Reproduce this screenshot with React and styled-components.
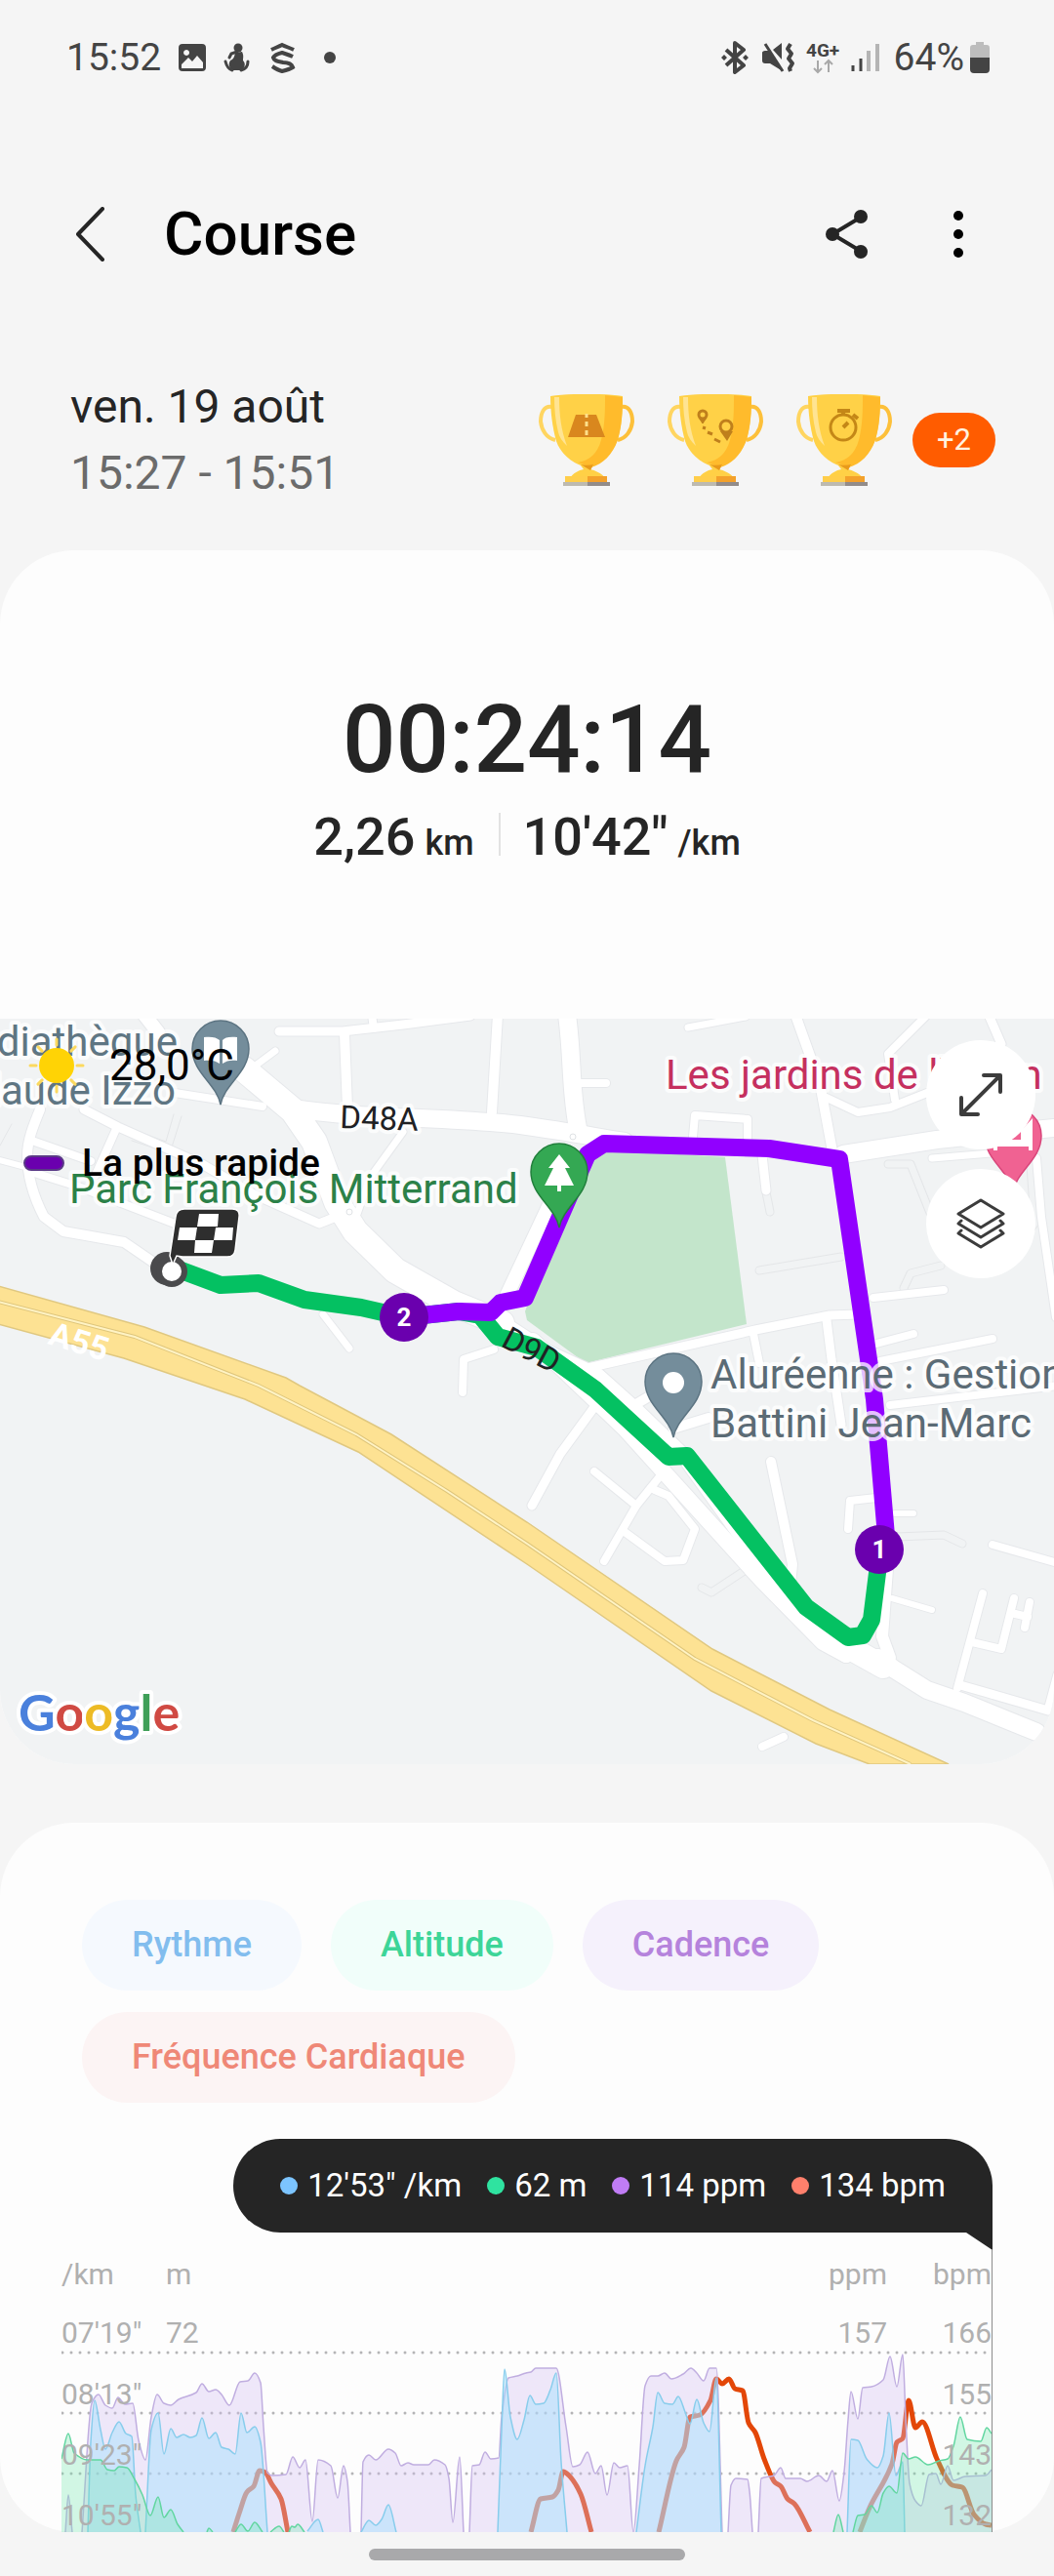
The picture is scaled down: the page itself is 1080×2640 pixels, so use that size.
import React from "react";
import styled, { createGlobalStyle } from "styled-components";

const GlobalStyle = createGlobalStyle`
  * { box-sizing: border-box; }
  body {
    margin: 0;
    background: #f5f5f5;
    font-family: Roboto, "Liberation Sans", sans-serif;
    color: #252525;
  }
  button { font: inherit; border: 0; padding: 0; background: none; cursor: pointer; }
  svg { display: block; flex: none; }
`;

const Page = styled.main`
  display: flex;
  flex-direction: column;
  min-height: 100vh;
`;

const StatusBar = styled.div`
  display: flex;
  justify-content: space-between;
  padding: 36px 66px 36px 68px;
  font-size: 39px;
  line-height: 46px;
  color: #444;
`;

const StatusGroup = styled.div`
  display: flex;
  align-items: center;
  gap: ${(p) => p.$gap}px;
`;

const Header = styled.header`
  display: flex;
  align-items: center;
  padding: 84px 78px 80px;
`;

const Title = styled.h1`
  flex: 1;
  margin: 0 0 0 60px;
  font-size: 62px;
  line-height: 76px;
  font-weight: 500;
  color: #000;
`;

const HeaderActions = styled.div`
  display: flex;
  gap: 86px;
  padding-right: 14px;
`;

const Summary = styled.section`
  display: flex;
  justify-content: space-between;
  align-items: center;
  padding: 25px 60px 45px 72px;
`;

const When = styled.div`
  font-size: 48px;
  line-height: 68px;
`;

const Hours = styled.div`
  color: #6b6b6b;
`;

const Awards = styled.div`
  display: flex;
  align-items: center;
  gap: 21px;
`;

const Trophies = styled.div`
  display: flex;
  gap: 34px;
`;

const MoreBadge = styled.button`
  padding: 0 25px;
  border-radius: 28px;
  background: #ff5c00;
  color: #fff3e0;
  font-size: 31px;
  line-height: 56px;
`;

const Card = styled.section`
  background: #fdfdfd;
  border-radius: 76px;
`;

const ResultCard = styled(Card)`
  margin-bottom: 60px;
  overflow: hidden;
`;

const Result = styled.div`
  display: flex;
  flex-direction: column;
  align-items: center;
  gap: 12px;
  padding: 138px 0 154px;
  font-weight: 500;
`;

const Duration = styled.div`
  font-size: 96px;
  line-height: 112px;
`;

const Stats = styled.div`
  display: flex;
  font-size: 54px;
  line-height: 64px;
`;

const Stat = styled.div`
  padding: 0 25px;

  & + & { background: linear-gradient(#e2e2e2, #e2e2e2) 0 7px / 2px 44px no-repeat; }
`;

const Unit = styled.span`
  margin-left: 10px;
  font-size: 36px;
  line-height: 36px;
`;

const MapBox = styled.div`
  position: relative;
  background: #f1f3f4;

  > svg { width: 100%; height: auto; }
`;

const MapInfo = styled.div`
  position: absolute;
  top: 18px;
  left: 24px;
  color: #000;
`;

const Weather = styled.div`
  display: flex;
  align-items: center;
  gap: 20px;
  margin-bottom: 40px;
  font-size: 44px;
  line-height: 60px;
`;

const Legend = styled.div`
  display: flex;
  align-items: center;
  gap: 18px;
  font-size: 39px;
  line-height: 60px;
  font-weight: 500;
`;

const LegendSwatch = styled.span`
  width: 42px;
  height: 16px;
  border: 2px solid #5a3a86;
  border-radius: 8px;
  background: #6a00ae;
`;

const MapButtons = styled.div`
  position: absolute;
  top: 22px;
  right: 19px;
  display: grid;
  gap: 20px;
`;

const RoundButton = styled.button`
  display: grid;
  place-items: center;
  width: 112px;
  height: 112px;
  border-radius: 50%;
  background: #fff;
`;

const Place = styled.text`
  font-size: ${(p) => p.$size || 42}px;
  fill: ${(p) => p.$color};
  stroke: ${(p) => p.$halo || "rgba(255, 255, 255, 0.75)"};
  stroke-width: 8px;
  stroke-linejoin: round;
  paint-order: stroke;
`;

const GoogleMark = styled.text`
  font-family: Lato, sans-serif;
  font-size: 52px;
  font-weight: 700;
  stroke: #fff;
  stroke-width: 8px;
  stroke-linejoin: round;
  paint-order: stroke;
`;

const ChartCard = styled(Card)`
  display: flex;
  flex-direction: column;
  padding: 79px 63px 0;
`;

const Chips = styled.div`
  display: flex;
  flex-wrap: wrap;
  gap: 22px 30px;
  padding: 0 21px;
  margin-bottom: 37px;
`;

const Chip = styled.button`
  padding: 0 51px;
  border-radius: 47px;
  font-size: 36px;
  line-height: 93px;
  font-weight: 500;
  color: ${(p) => p.$color};
  background: ${(p) => p.$bg};
`;

const Tooltip = styled.div`
  position: relative;
  align-self: flex-end;
  display: flex;
  gap: 26px;
  margin-bottom: 18px;
  padding: 0 48px;
  border-radius: 48px 48px 0 48px;
  background: #252525;
  color: #fff;
  font-size: 33px;
  line-height: 96px;
  white-space: nowrap;

  &::after {
    content: "";
    position: absolute;
    top: 100%;
    right: 0;
    width: 27px;
    height: 18px;
    background: #252525;
    clip-path: polygon(0 0, 100% 0, 100% 100%);
  }
`;

const Reading = styled.span`
  display: flex;
  align-items: center;
  gap: 10px;

  &::before {
    content: "";
    width: 18px;
    height: 18px;
    border-radius: 50%;
    background: ${(p) => p.$dot};
  }
`;

const Chart = styled.svg`
  width: 100%;
  height: auto;
`;

const AxisLabel = styled.text`
  font-size: 30px;
  fill: #b0b0b0;
`;

const NavBar = styled.div`
  display: flex;
  justify-content: center;
  padding: 17px 0 16px;
`;

const HomeHandle = styled.div`
  width: 30%;
  height: 12px;
  border-radius: 6px;
  background: #a9a9ab;
`;

/* ---------- status bar ---------- */

const LeftIcons = () => (
  <svg width="164" height="32" viewBox="182 43 164 32" fill="#444">
    <path fillRule="evenodd" d="M187 45h20a4 4 0 0 1 4 4v20a4 4 0 0 1-4 4h-20a4 4 0 0 1-4-4V49a4 4 0 0 1 4-4ZM186 70h22v-6l-6-7-5 6-4-4-7 7ZM191 51a3 3 0 1 0 .1 0Z" />
    <circle cx="244" cy="49" r="4.500" />
    <path d="M241 54l7-1c2 4 1 6 1 9 3 3 2 7-1 10h-9c-5-2-5-7-3-10 3-1 4-3 5-8Z" />
    <path d="M243 53l-6 2-2 4M231 63c1 4 3 8 7 9M254 63c0 5-3 8-7 9" fill="none" stroke="#444" strokeWidth="3" strokeLinecap="round" />
    <path d="M278 51c4-2 7-3 11-5 4 2 8 3 12 5M300 58c-4-2-8-3-11-4-4 1-8 3-9 5 1 4 5 4 10 5 5 0 9 2 10 5-3 2-7 3-11 4-4-1-7-3-10-5" fill="none" stroke="#444" strokeWidth="4" />
    <circle cx="338" cy="59" r="6" />
  </svg>
);

const RightIcons = () => (
  <svg width="164" height="34" viewBox="737 42 164 34" fill="none">
    <path d="M743 51l18 16-9 7V44l9 7-18 16" stroke="#444" strokeWidth="4" strokeLinejoin="round" />
    <path d="M738 59l3-3 3 3-3 3ZM760 59l3-3 3 3-3 3Z" fill="#444" />
    <path d="M780 54c0-1 1-2 3-2h5l13 21-13-8h-5c-2 0-3-1-3-3ZM791 51l9-7v17Z" fill="#444" />
    <path d="M783 45l18 28" stroke="#444" strokeWidth="3" />
    <path d="M809 45l-3 5 4 5-3 5 4 5-3 5 1 3" stroke="#444" strokeWidth="4" strokeLinejoin="round" />
    <text x="825" y="58" fontSize="19" fontWeight="700" fill="#444">4G+</text>
    <path d="M837 62v12m-4-4l4 4 4-4M848 74V62m-4 4l4-4 4 4" stroke="#a8a8a8" strokeWidth="2" />
    <path d="M873 67v6M881 60v13" stroke="#444" strokeWidth="3" />
    <path d="M889 52v21M898 45v28" stroke="#b4b4b4" strokeWidth="4" />
  </svg>
);

const Battery = () => (
  <svg width="20" height="32" viewBox="0 0 20 32">
    <path d="M6 0h8v3h3a3 3 0 0 1 3 3v11H0V6a3 3 0 0 1 3-3h3Z" fill="#bdbdbd" />
    <path d="M0 16h20v12a4 4 0 0 1-4 4H4a4 4 0 0 1-4-4Z" fill="#444" />
  </svg>
);

/* ---------- trophies ---------- */

const trophyIcons = {
  distance: (
    <g>
      <path d="M38 21h21l9 23H30Z" fill="#d9871e" />
      <path d="M49 20v4M49 28v5M49 37v5" stroke="#ffe08a" strokeWidth="3" />
    </g>
  ),
  route: (
    <g fill="none" stroke="#bf7f1c">
      <circle cx="36" cy="21" r="4" strokeWidth="3" />
      <path d="M32 24l4 6 4-6" fill="#bf7f1c" />
      <circle cx="60" cy="33" r="6" strokeWidth="3" />
      <path d="M54 38l7 10 6-10Z" fill="#bf7f1c" stroke="none" />
      <path d="M36 34l3 1M41 39l5 2M48 46l6 3" strokeWidth="3" />
    </g>
  ),
  time: (
    <g fill="none" stroke="#c48717" strokeWidth="3">
      <circle cx="48" cy="34" r="13" />
      <path d="M42 17h13M48 17v5M58 21l5 4M48 34l5-5" strokeWidth="4" />
    </g>
  ),
};

const Trophy = ({ kind }) => (
  <svg width="98" height="94" viewBox="0 0 98 94" role="img" aria-label={kind}>
    <path d="M14 13C5 11 2 20 2 28c1 9 6 17 15 19" fill="none" stroke="#ffd560" strokeWidth="4" />
    <path d="M84 13c9-2 12 7 12 15-1 9-6 17-15 19" fill="none" stroke="#fdc03a" strokeWidth="4" />
    <path d="M12 2c20-3 54-3 74 0 0 16-1 30-5 44-6 16-15 24-27 28h-8C33 70 22 60 18 48 14 34 12 18 12 2Z" fill="#ffd147" />
    <path d="M68 1l18 2c0 16-1 30-5 44-6 16-15 24-27 28-4-2-8-3-14-5 12-2 20-9 24-23 4-15 4-31 4-46Z" fill="#ffbb2c" />
    <path d="M16 3h5c0 18 2 34 8 50-5-5-8-9-9-14-3-12-4-24-4-36Z" fill="#ffe492" />
    <path d="M43 73h13l-3 4c4 1 12 4 14 8H33c2-4 8-7 13-8Z" fill="#ffd046" />
    <path d="M43 72c5 1 9 1 13 0l-3 6Z" fill="#e99a1b" />
    <path d="M27 84h23v6H27Z" fill="#ffce4a" />
    <path d="M50 84h20v6H50Z" fill="#f3a12b" />
    <path d="M25 90h25v4H25Z" fill="#bdbab0" />
    <path d="M50 90h23v4H50Z" fill="#928c8a" />
    {trophyIcons[kind]}
  </svg>
);

/* ---------- map ---------- */

const roads = [
  [26, "M250 52L300 94 322 126 345 188 364 218 405 258 465 292 514 312"],
  [16, "M514 312L560 342 612 366 650 400 704 452 760 530 830 620 867 652"],
  [16, "M546 330L640 420 781 576 843 639 867 652"],
  [24, "M862 640L905 664"],
  [18, "M900 655L915 666 950 688 988 701 1062 731"],
  [18, "M300 92C380 104 470 100 540 110S600 120 640 126"],
  [18, "M864 139L960 124 1080 112"],
  [8, "M179 76L269 90"],
  [9, "M286 13H351L413 6 482 -3"],
  [8, "M381 -4L383 10"],
  [14, "M148 -4L162 14"],
  [10, "M353 16L356 92"],
  [10, "M510 -4L504 96"],
  [7, "M282 33L255 53"],
  [9, "M86 93L121 111 207 149 260 180 327 210 352 200"],
  [10, "M41 93C34 110 28 125 28 140S32 178 45 203L65 218 127 229 162 253"],
  [8, "M30 124L93 146"],
  [8, "M32 157L80 172 179 210"],
  [8, "M119 113L98 160"],
  [6, "M-4 144L26 152"],
  [7, "M413 116L379 163 366 200"],
  [7, "M331 303L358 338"],
  [8, "M506 339L475 349 474 383"],
  [14, "M568 180L520 282"],
  [18, "M581 -4C587 40 584 70 592 112"],
  [8, "M592 66H621"],
  [7, "M705 9L764 -2"],
  [10, "M815 -4L840 66 853 136"],
  [8, "M847 81L879 96 912 91 950 76"],
  [8, "M950 -4L910 36 917 83"],
  [9, "M1013 -4L1026 26"],
  [8, "M710 121L712 99 766 103V124"],
  [9, "M781 140L785 176"],
  [8, "M1062 143L1067 203 1082 306"],
  [7, "M955 143L1015 138"],
  [9, "M602 358L774 319 850 304 880 303"],
  [8, "M895 286L967 278"],
  [8, "M898 333L936 323"],
  [8, "M902 351L1017 328"],
  [9, "M847 309L852 349 862 416"],
  [8, "M772 323L778 353"],
  [8, "M912 396L1084 376"],
  [9, "M609 398L574 446 545 499"],
  [8, "M609 464L652 499"],
  [8, "M681 463L652 499 619 556"],
  [8, "M671 483L685 489 712 523 700 555 681 556 640 526"],
  [10, "M650 396L667 386M690 420L726 409"],
  [10, "M790 454L812 559 810 580"],
  [8, "M869 523L871 494 898 491"],
  [6, "M917 507H936"],
  [8, "M1017 539L1084 558"],
  [6, "M914 594L955 606"],
  [8, "M1007 589L981 686"],
  [8, "M996 639L1026 646 1039 594M1055 598L1050 624M1036 609L1053 613"],
  [9, "M984 683L1012 691 1074 709 1084 672"],
  [8, "M781 746L803 736"],
  [12, "M910 550L904 633 912 655"],
];

const lanes = [
  "M785 178L789 198",
  "M719 583L729 588 767 563",
  "M919 531L967 529 986 538",
  "M778 258L862 244",
  "M910 149L933 149 953 199",
  "M926 276L933 261 964 253",
  "M1056 150L1060 210 1040 236",
];

const greenRoute =
  "M175 254L226 273 265 271 312 288 370 296 414 306 470 300 492 304 510 326 550 337 610 380 685 449 704 448 826 603 869 634 884 632 893 616 902 544";
const purpleRoute =
  "M414 306L470 300 503 301 513 291 538 286 574 203 602 139 619 128 788 133 860 144 891 356 896 390 908 530";

const Pin = ({ x, y, color, edge, children }) => (
  <g transform={`translate(${x} ${y})`}>
    <path d="M0 57C-4 36-29 24-29 0a29 29 0 0 1 58 0C29 24 4 36 0 57Z" fill={color} stroke={edge} strokeWidth="1.500" />
    {children}
  </g>
);

const Milestone = ({ x, y, label }) => (
  <g>
    <circle cx={x} cy={y} r="25" fill="#6a00ae" />
    <text x={x} y={y + 9} fontSize="26" fontWeight="700" fill="#fff" textAnchor="middle">{label}</text>
  </g>
);

const RouteMap = () => (
  <svg viewBox="0 0 1080 764" role="img" aria-label="Parcours">
    <path d="M538 300L574 203 602 139 619 134 743 142 765 313 600 353 540 309Z" fill="#c3e5cb" />
    <g fill="none" strokeLinecap="round" strokeLinejoin="round">
      {lanes.map((d) => <path key={d} d={d} stroke="#e4e6e8" strokeWidth="9" />)}
      {lanes.map((d) => <path key={d} d={d} stroke="#f1f3f4" strokeWidth="7" />)}
      <path d="M135 125L174 138 186 100M0 130L12 108M140 115L170 126 178 98" stroke="#e4e6e8" />
      {roads.map(([w, d]) => <path key={d} d={d} stroke="#e6e8eb" strokeWidth={w + 2} />)}
      {roads.map(([w, d]) => <path key={d} d={d} stroke="#fff" strokeWidth={w} />)}
    </g>
    <circle cx="358" cy="198" r="3" fill="none" stroke="#dfe2e5" />
    <circle cx="587" cy="121" r="3" fill="none" stroke="#dfe2e5" />
    <path d="M-2 274L148 316 293 368 307 376 401 426 540 516 730 646 850 708 972 764H891L836 743 729 689 540 559 367 444 251 390 127 348-2 313Z" fill="#fde293" stroke="#e0c880" strokeWidth="1.500" />
    <path d="M-2 290L138 326 265 376 365 426 458 484 540 538 712 656 833 719 933 764" fill="none" stroke="#dfc67c" strokeWidth="4" />
    <path d="M-2 290L138 326 265 376 365 426 458 484 540 538 712 656 833 719 933 764" fill="none" stroke="#fff3c4" strokeWidth="2" />
    <text x="48" y="333" fontSize="34" fontWeight="700" fill="#fff" transform="rotate(17 48 333)">A55</text>

    <g fill="none" strokeWidth="18" strokeLinejoin="round">
      <path d={greenRoute} stroke="#04c162" />
      <path d={purpleRoute} stroke="#9100ff" />
    </g>

    <Place x="182" y="38" textAnchor="end" $color="#5f7683">diathèque</Place>
    <Place x="180" y="88" textAnchor="end" $color="#5f7683">laude Izzo</Place>
    <Place x="348" y="112" $size="33" $color="#202124" transform="rotate(2 348 112)">D48A</Place>
    <Place x="512" y="335" $size="33" $color="#202124" $halo="none" transform="rotate(28 512 335)">D9D</Place>
    <Place x="71" y="189" $color="#2c8148">Parc François Mitterrand</Place>
    <Place x="682" y="72" $color="#c5305f">Les jardins de l'Orien</Place>
    <Place x="728" y="379" $color="#5b6b75">Aluréenne : Gestion</Place>
    <Place x="728" y="429" $color="#5b6b75">Battini Jean-Marc</Place>

    <Pin x="226" y="31" color="#748d9b" edge="#5c7482">
      <path d="M-17-12c7-1 13 0 16 3v24c-4-3-9-4-16-3ZM17-12C10-13 4-12 2-9v24c4-3 9-4 15-3Z" fill="#fff" />
    </Pin>
    <Pin x="573" y="157" color="#34a853" edge="#22803c">
      <path d="M0-18l11 14H6l9 18H2v6h-4v-6h-13l9-18h-5Z" fill="#fff" />
    </Pin>
    <Pin x="690" y="372" color="#748d9b" edge="#5c7482">
      <circle r="11" cy="1" fill="#fff" />
    </Pin>
    <Pin x="1038" y="120" color="#f06292" edge="#d9467b">
      <path d="M-20-14v29h4v-4h32v4h4v-33L8-5v9h-24v-18Z" fill="#fff" />
    </Pin>

    <circle cx="171" cy="256" r="17" fill="#4a4a4c" />
    <circle cx="176" cy="259" r="13" fill="#fff" stroke="#4a4a4c" strokeWidth="6" />
    <path d="M189 195h49q8 0 7 8l-4 34q-1 7-8 7h-46l-6-1-4 9-3-9 6-40q1-8 9-8Z" fill="#2e2e2e" stroke="#fff" strokeWidth="1.500" />
    <path d="M204 200h20l-1 13h-21ZM184 214h18l-2 13h-18ZM221 214h18l-1 13h-19ZM200 227h19l-2 13h-18Z" fill="#fff" />

    <Milestone x={414} y={306} label="2" />
    <Milestone x={901} y={544} label="1" />

    <GoogleMark x="19" y="730">
      <tspan fill="#4a80dc">G</tspan>
      <tspan fill="#d04a43">o</tspan>
      <tspan fill="#edbb25">o</tspan>
      <tspan fill="#4a80dc">g</tspan>
      <tspan fill="#3f9f58">l</tspan>
      <tspan fill="#d04a43">e</tspan>
    </GoogleMark>
  </svg>
);

const Sun = () => (
  <svg width="68" height="60" viewBox="-34 -30 68 60">
    <circle r="18" fill="#ffd305" />
    {[0, 45, 90, 135, 180, 225, 270, 315].map((a) => (
      <path key={a} d="M21 0h6" stroke="#fbd95f" strokeWidth="3" strokeLinecap="round" transform={`rotate(${a})`} />
    ))}
  </svg>
);

/* ---------- chart ---------- */

const FLOOR = 289;

const cadence = [
  [[4, 289], [7, 251], [11, 289]],
  [[21, 289], [31, 157], [38, 148], [45, 159], [52, 162], [58, 151], [65, 158], [73, 157], [79, 195], [86, 215], [92, 171], [98, 148], [105, 157], [112, 159], [120, 153], [138, 146], [144, 137], [151, 145], [158, 143], [164, 148], [172, 159], [183, 135], [191, 134], [198, 126], [204, 136], [207, 181], [211, 228], [216, 231], [230, 230], [237, 212], [244, 223], [250, 215], [257, 278], [263, 215], [276, 221], [283, 254], [289, 221], [293, 237], [296, 289]],
  [[307, 289], [309, 217], [315, 210], [322, 215], [335, 204], [342, 208], [348, 221], [355, 218], [361, 220], [376, 220], [382, 215], [393, 220], [397, 234], [401, 279], [408, 212], [412, 289]],
  [[418, 289], [421, 221], [428, 220], [434, 207], [440, 214], [448, 213], [451, 171], [458, 131], [467, 129], [476, 126], [481, 125], [486, 121], [507, 121], [517, 181], [524, 222], [531, 220], [539, 207], [547, 229], [553, 221], [559, 251], [566, 218], [572, 223], [580, 221], [586, 289], [592, 221], [598, 139], [604, 129], [611, 129], [618, 126], [625, 132], [637, 127], [645, 121], [651, 126], [658, 134], [664, 121], [671, 121], [677, 289]],
  [[683, 289], [686, 241], [691, 234], [703, 235], [705, 247], [708, 289]],
  [[714, 289], [717, 234], [730, 231], [737, 223], [742, 234], [757, 234], [764, 237], [776, 231], [784, 237], [790, 226], [797, 257], [802, 227], [806, 174], [809, 145], [816, 173], [821, 141], [830, 140], [842, 133], [849, 109], [856, 140], [862, 107], [865, 171], [869, 239], [875, 257], [881, 262], [889, 230], [896, 229], [901, 240], [908, 221], [914, 236], [926, 232], [947, 231], [953, 225]],
];

const pace = [
  [[27, 289], [30, 197], [34, 154], [40, 184], [45, 204], [52, 187], [59, 176], [66, 188], [72, 191], [76, 251], [81, 289]],
  [[86, 289], [92, 184], [99, 167], [105, 209], [112, 183], [118, 192], [125, 189], [132, 192], [138, 190], [144, 172], [151, 193], [158, 187], [164, 202], [171, 204], [178, 209], [184, 167], [190, 187], [198, 181], [204, 197], [211, 289]],
  [[252, 288], [263, 276], [268, 289]],
  [[307, 289], [315, 277], [322, 282], [328, 276], [335, 261], [343, 289]],
  [[447, 289], [451, 184], [454, 122], [460, 171], [467, 194], [474, 174], [480, 149], [486, 158], [494, 157], [501, 143], [507, 126], [512, 217], [518, 289]],
  [[589, 289], [598, 221], [606, 181], [611, 146], [618, 157], [626, 158], [632, 150], [639, 166], [644, 178], [651, 153], [658, 177], [664, 186], [671, 131], [676, 289]],
  [[805, 289], [809, 194], [816, 195], [825, 214], [836, 223], [842, 211], [848, 167], [855, 231], [862, 217], [864, 289]],
];

const altitude = [
  [[0, 214], [7, 188], [13, 208], [27, 215], [40, 215], [47, 225], [54, 226], [59, 222], [67, 223], [75, 235], [83, 251], [91, 272], [99, 253], [105, 274], [112, 266], [119, 281], [125, 289]],
  [[149, 289], [151, 285], [155, 289]],
  [[178, 289], [184, 281], [191, 288], [198, 279], [206, 289]],
  [[214, 289], [223, 283], [228, 289]],
  [[233, 289], [236, 283], [239, 284], [242, 281], [249, 289]],
  [[791, 289], [796, 271], [801, 289]],
  [[811, 289], [816, 272], [823, 271], [830, 262], [836, 269], [842, 249], [848, 242], [856, 249], [862, 208], [868, 214], [875, 212], [888, 220], [899, 216], [908, 214], [914, 201], [921, 171], [928, 194], [942, 196], [948, 182], [953, 188]],
];

const heartRate = [
  [[176, 289], [182, 270], [190, 248], [197, 242], [203, 226], [209, 228], [215, 239], [225, 255], [232, 289]],
  [[481, 289], [491, 255], [503, 253], [509, 246], [514, 227], [520, 231], [532, 250], [543, 289]],
  [[612, 289], [630, 216], [638, 202], [644, 171], [654, 169], [665, 154], [671, 132], [677, 137], [684, 132], [690, 142], [698, 144], [704, 177], [711, 187], [720, 214], [731, 238], [737, 242], [744, 255], [751, 260], [767, 289]],
  [[818, 289], [828, 264], [851, 219], [856, 197], [862, 193], [868, 154], [875, 182], [882, 176], [897, 214], [913, 241], [923, 243], [935, 271], [947, 281], [953, 282]],
];

// Monotone slopes keep the curve from overshooting its peaks.
function curve(points) {
  const slope = (a, b) => (b[1] - a[1]) / (b[0] - a[0]);
  const tangents = points.map((p, i) => {
    if (i === 0) return slope(p, points[1]);
    if (i === points.length - 1) return slope(points[i - 1], p);
    const before = slope(points[i - 1], p);
    const after = slope(p, points[i + 1]);
    return before * after <= 0 ? 0 : (2 * before * after) / (before + after);
  });
  return points.reduce((d, p, i) => {
    if (i === 0) return `M${p[0]} ${p[1]}`;
    const q = points[i - 1];
    const h = (p[0] - q[0]) / 3;
    return `${d}C${q[0] + h} ${q[1] + tangents[i - 1] * h} ${p[0] - h} ${p[1] - tangents[i] * h} ${p[0]} ${p[1]}`;
  }, "");
}

const Area = ({ series, fill, opacity, stroke }) =>
  series.map((points) => (
    <g key={points[0][0]}>
      <path
        d={`${curve(points)}V${FLOOR}H${points[0][0]}Z`}
        fill={fill}
        fillOpacity={opacity}
      />
      <path d={curve(points)} fill="none" stroke={stroke} strokeWidth="1.500" />
    </g>
  ));

const axis = [
  { x: 0, labels: ["/km", "07'19\"", "08'13\"", "09'23\"", "10'55\""] },
  { x: 107, labels: ["m", "72"] },
  { x: 846, end: true, labels: ["ppm", "157"] },
  { x: 953, end: true, labels: ["bpm", "166", "155", "143", "132"] },
];
const rows = [35, 95, 158, 220, 282];

const ActivityChart = () => (
  <Chart viewBox="0 0 954 289" role="img" aria-label="Rythme, altitude, cadence et fréquence cardiaque">
    <path d="M1 105H953M1 167H953M1 229H953" stroke="#b4b4b6" strokeWidth="3" strokeLinecap="round" strokeDasharray="0 9" />
    {heartRate.map((points) => (
      <path key={points[0][0]} d={curve(points)} fill="none" stroke="#e34708" strokeWidth="5" strokeLinejoin="round" />
    ))}
    <Area series={cadence} fill="#d1bdf1" opacity="0.35" stroke="#c0aee0" />
    <Area series={pace} fill="#9fdffc" opacity="0.45" stroke="#88cdec" />
    <Area series={altitude} fill="#6ee7ab" opacity="0.3" stroke="#62d6a0" />
    {axis.map((column) =>
      column.labels.map((label, i) => (
        <AxisLabel key={label} x={column.x} y={rows[i]} textAnchor={column.end ? "end" : "start"}>
          {label}
        </AxisLabel>
      ))
    )}
    <path d="M953.500 0V289" stroke="#8c8c8c" />
  </Chart>
);

export default function App() {
  return (
    <Page>
      <GlobalStyle />
      <StatusBar>
        <StatusGroup $gap={17}>
          15:52
          <LeftIcons />
        </StatusGroup>
        <StatusGroup $gap={14}>
          <RightIcons />
          <StatusGroup $gap={6}>
            64%
            <Battery />
          </StatusGroup>
        </StatusGroup>
      </StatusBar>

      <Header>
        <button aria-label="Retour">
          <svg width="30" height="56" viewBox="0 0 30 56" fill="none" stroke="#252525" strokeWidth="4" strokeLinecap="round" strokeLinejoin="round">
            <path d="M27 2L2 28l25 26" />
          </svg>
        </button>
        <Title>Course</Title>
        <HeaderActions>
          <button aria-label="Partager">
            <svg width="44" height="50" viewBox="0 0 44 50" fill="#252525">
              <path d="M37 7L7 25l30 18" fill="none" stroke="#252525" strokeWidth="4" />
              <circle cx="36" cy="7" r="7" />
              <circle cx="7" cy="25" r="7" />
              <circle cx="36" cy="43" r="7" />
            </svg>
          </button>
          <button aria-label="Plus d'options">
            <svg width="12" height="50" viewBox="0 0 12 50">
              <circle cx="6" cy="6" r="5" />
              <circle cx="6" cy="25" r="5" />
              <circle cx="6" cy="44" r="5" />
            </svg>
          </button>
        </HeaderActions>
      </Header>

      <Summary>
        <When>
          <div>ven. 19 août</div>
          <Hours>15:27 - 15:51</Hours>
        </When>
        <Awards>
          <Trophies>
            <Trophy kind="distance" />
            <Trophy kind="route" />
            <Trophy kind="time" />
          </Trophies>
          <MoreBadge>+2</MoreBadge>
        </Awards>
      </Summary>

      <ResultCard>
        <Result>
          <Duration>00:24:14</Duration>
          <Stats>
            <Stat>2,26<Unit>km</Unit></Stat>
            <Stat>10'42"<Unit>/km</Unit></Stat>
          </Stats>
        </Result>
        <MapBox>
          <RouteMap />
          <MapInfo>
            <Weather><Sun />28,0°C</Weather>
            <Legend><LegendSwatch />La plus rapide</Legend>
          </MapInfo>
          <MapButtons>
            <RoundButton aria-label="Agrandir la carte">
              <svg width="44" height="44" viewBox="0 0 44 44" fill="none" stroke="#3c3c3c" strokeWidth="4" strokeLinecap="round" strokeLinejoin="round">
                <path d="M3 41L41 3M25 2h17v17M2 25v17h17" />
              </svg>
            </RoundButton>
            <RoundButton aria-label="Type de carte">
              <svg width="50" height="52" viewBox="0 0 50 52" fill="none" stroke="#3c3c3c" strokeWidth="3" strokeLinecap="round" strokeLinejoin="round">
                <path d="M25 2l23 14-23 14L2 16ZM5 23l-3 3 23 14 23-14-3-3M5 33l-3 3 23 14 23-14-3-3" />
              </svg>
            </RoundButton>
          </MapButtons>
        </MapBox>
      </ResultCard>

      <ChartCard>
        <Chips>
          <Chip $color="#82bdee" $bg="#f5f9fe">Rythme</Chip>
          <Chip $color="#3dd598" $bg="#f1fefa">Altitude</Chip>
          <Chip $color="#b583dc" $bg="#f5f1fc">Cadence</Chip>
          <Chip $color="#ef8877" $bg="#fcf4f4">Fréquence Cardiaque</Chip>
        </Chips>
        <Tooltip>
          <Reading $dot="#7cc4ff">12'53" /km</Reading>
          <Reading $dot="#2fe3a0">62 m</Reading>
          <Reading $dot="#c07cf5">114 ppm</Reading>
          <Reading $dot="#ff806c">134 bpm</Reading>
        </Tooltip>
        <ActivityChart />
      </ChartCard>

      <NavBar>
        <HomeHandle />
      </NavBar>
    </Page>
  );
}
